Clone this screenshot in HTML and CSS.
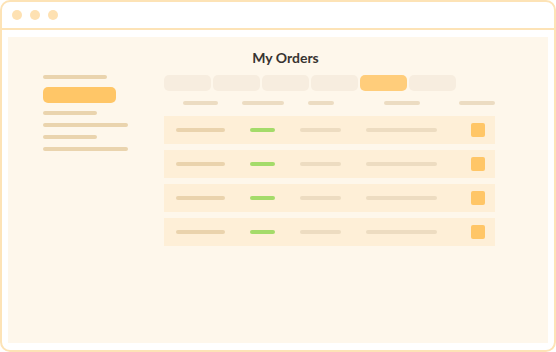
FILE: index.html
```
<!DOCTYPE html>
<html lang="en">
<head>
    <meta charset="UTF-8">
    <meta name="viewport" content="width=device-width, initial-scale=1.0">
    <title>My Orders</title>
    <link rel="stylesheet" href="styles.css">
</head>
<body>

<div class="window">
    <!-- title bar -->
    <div class="titlebar">
        <span class="dot"></span>
        <span class="dot"></span>
        <span class="dot"></span>
    </div>

    <div class="frame">
        <div class="page">
            <h1>My Orders</h1>

            <div class="layout">
                <!-- sidebar -->
                <div class="sidebar">
                    <span class="line w64"></span>
                    <span class="nav-active"></span>
                    <span class="line w54"></span>
                    <span class="line w85"></span>
                    <span class="line w54"></span>
                    <span class="line w85"></span>
                </div>

                <!-- orders -->
                <div class="main">
                    <div class="tabs">
                        <span class="tab"></span>
                        <span class="tab"></span>
                        <span class="tab"></span>
                        <span class="tab"></span>
                        <span class="tab active"></span>
                        <span class="tab"></span>
                    </div>

                    <div class="grid head">
                        <span class="hbar" style="width: 35px"></span>
                        <span class="hbar" style="width: 42px"></span>
                        <span class="hbar" style="width: 26px"></span>
                        <span class="hbar" style="width: 36px"></span>
                        <span class="hbar last" style="width: 36px"></span>
                    </div>

                    <div class="rows">
                        <div class="grid row">
                            <span class="cell name"></span>
                            <span class="cell status"></span>
                            <span class="cell date"></span>
                            <span class="cell info"></span>
                            <span class="action"></span>
                        </div>
                        <div class="grid row">
                            <span class="cell name"></span>
                            <span class="cell status"></span>
                            <span class="cell date"></span>
                            <span class="cell info"></span>
                            <span class="action"></span>
                        </div>
                        <div class="grid row">
                            <span class="cell name"></span>
                            <span class="cell status"></span>
                            <span class="cell date"></span>
                            <span class="cell info"></span>
                            <span class="action"></span>
                        </div>
                        <div class="grid row">
                            <span class="cell name"></span>
                            <span class="cell status"></span>
                            <span class="cell date"></span>
                            <span class="cell info"></span>
                            <span class="action"></span>
                        </div>
                    </div>
                </div>
            </div>
        </div>
    </div>
</div>

</body>
</html>
```

FILE: styles.css
```
* {
    box-sizing: border-box;
}

body {
    margin: 0;
    background: #fff;
    font-family: 'Lato', 'Noto Sans', Arial, sans-serif;
}

.window {
    width: 556px;
    height: 352px;
    border: 2px solid #fde3b6;
    border-radius: 10px;
    background: #fff;
    display: flex;
    flex-direction: column;
    overflow: hidden;
}

.titlebar {
    height: 28px;
    flex-shrink: 0;
    display: flex;
    align-items: center;
    gap: 8px;
    padding-left: 10px;
    border-bottom: 2px solid #fde3b6;
}

.dot {
    width: 10px;
    height: 10px;
    border-radius: 50%;
    background: #fee1b2;
}

.frame {
    flex: 1;
    padding: 7px 6px 7px 6px;
}

.page {
    height: 100%;
    background: #fef7eb;
    padding: 12px 0 0 35px;
}

h1 {
    margin: 0 0 9px;
    padding-right: 20px;
    font-size: 14px;
    line-height: 17px;
    font-weight: 700;
    color: #383431;
    text-align: center;
}

.layout {
    display: flex;
}

.sidebar {
    width: 121px;
    display: flex;
    flex-direction: column;
    gap: 8px;
}

.line {
    display: block;
    height: 4px;
    border-radius: 2px;
    background: #ead4ae;
}

.w64 { width: 64px; }
.w54 { width: 54px; }
.w85 { width: 85px; }

.nav-active {
    display: block;
    width: 73px;
    height: 16px;
    border-radius: 5px;
    background: #ffc667;
}

.main {
    width: 331px;
}

.tabs {
    display: flex;
    gap: 2px;
}

.tab {
    width: 47px;
    height: 16px;
    border-radius: 5px;
    background: #f7eddf;
}

.tab.active {
    background: #ffcd7b;
}

.grid {
    display: grid;
    grid-template-columns: 73px 51px 65px 97px 1fr;
    align-items: center;
    justify-items: center;
}

.head {
    margin: 10px 0 11px;
}

.hbar {
    height: 4px;
    border-radius: 2px;
    background: #ecdcc2;
}

.hbar.last {
    justify-self: end;
}

.rows {
    display: flex;
    flex-direction: column;
    gap: 6px;
}

.row {
    height: 28px;
    background: #feefd7;
}

.cell {
    height: 4px;
    border-radius: 2px;
}

.name {
    width: 49px;
    background: #ead3ad;
}

.status {
    width: 25px;
    background: #a4db6a;
}

.date {
    width: 41px;
    background: #eddcc1;
}

.info {
    width: 71px;
    background: #eddcc1;
}

.action {
    justify-self: end;
    margin-right: 10px;
    width: 14px;
    height: 14px;
    border-radius: 2px;
    background: #ffc667;
}
```
